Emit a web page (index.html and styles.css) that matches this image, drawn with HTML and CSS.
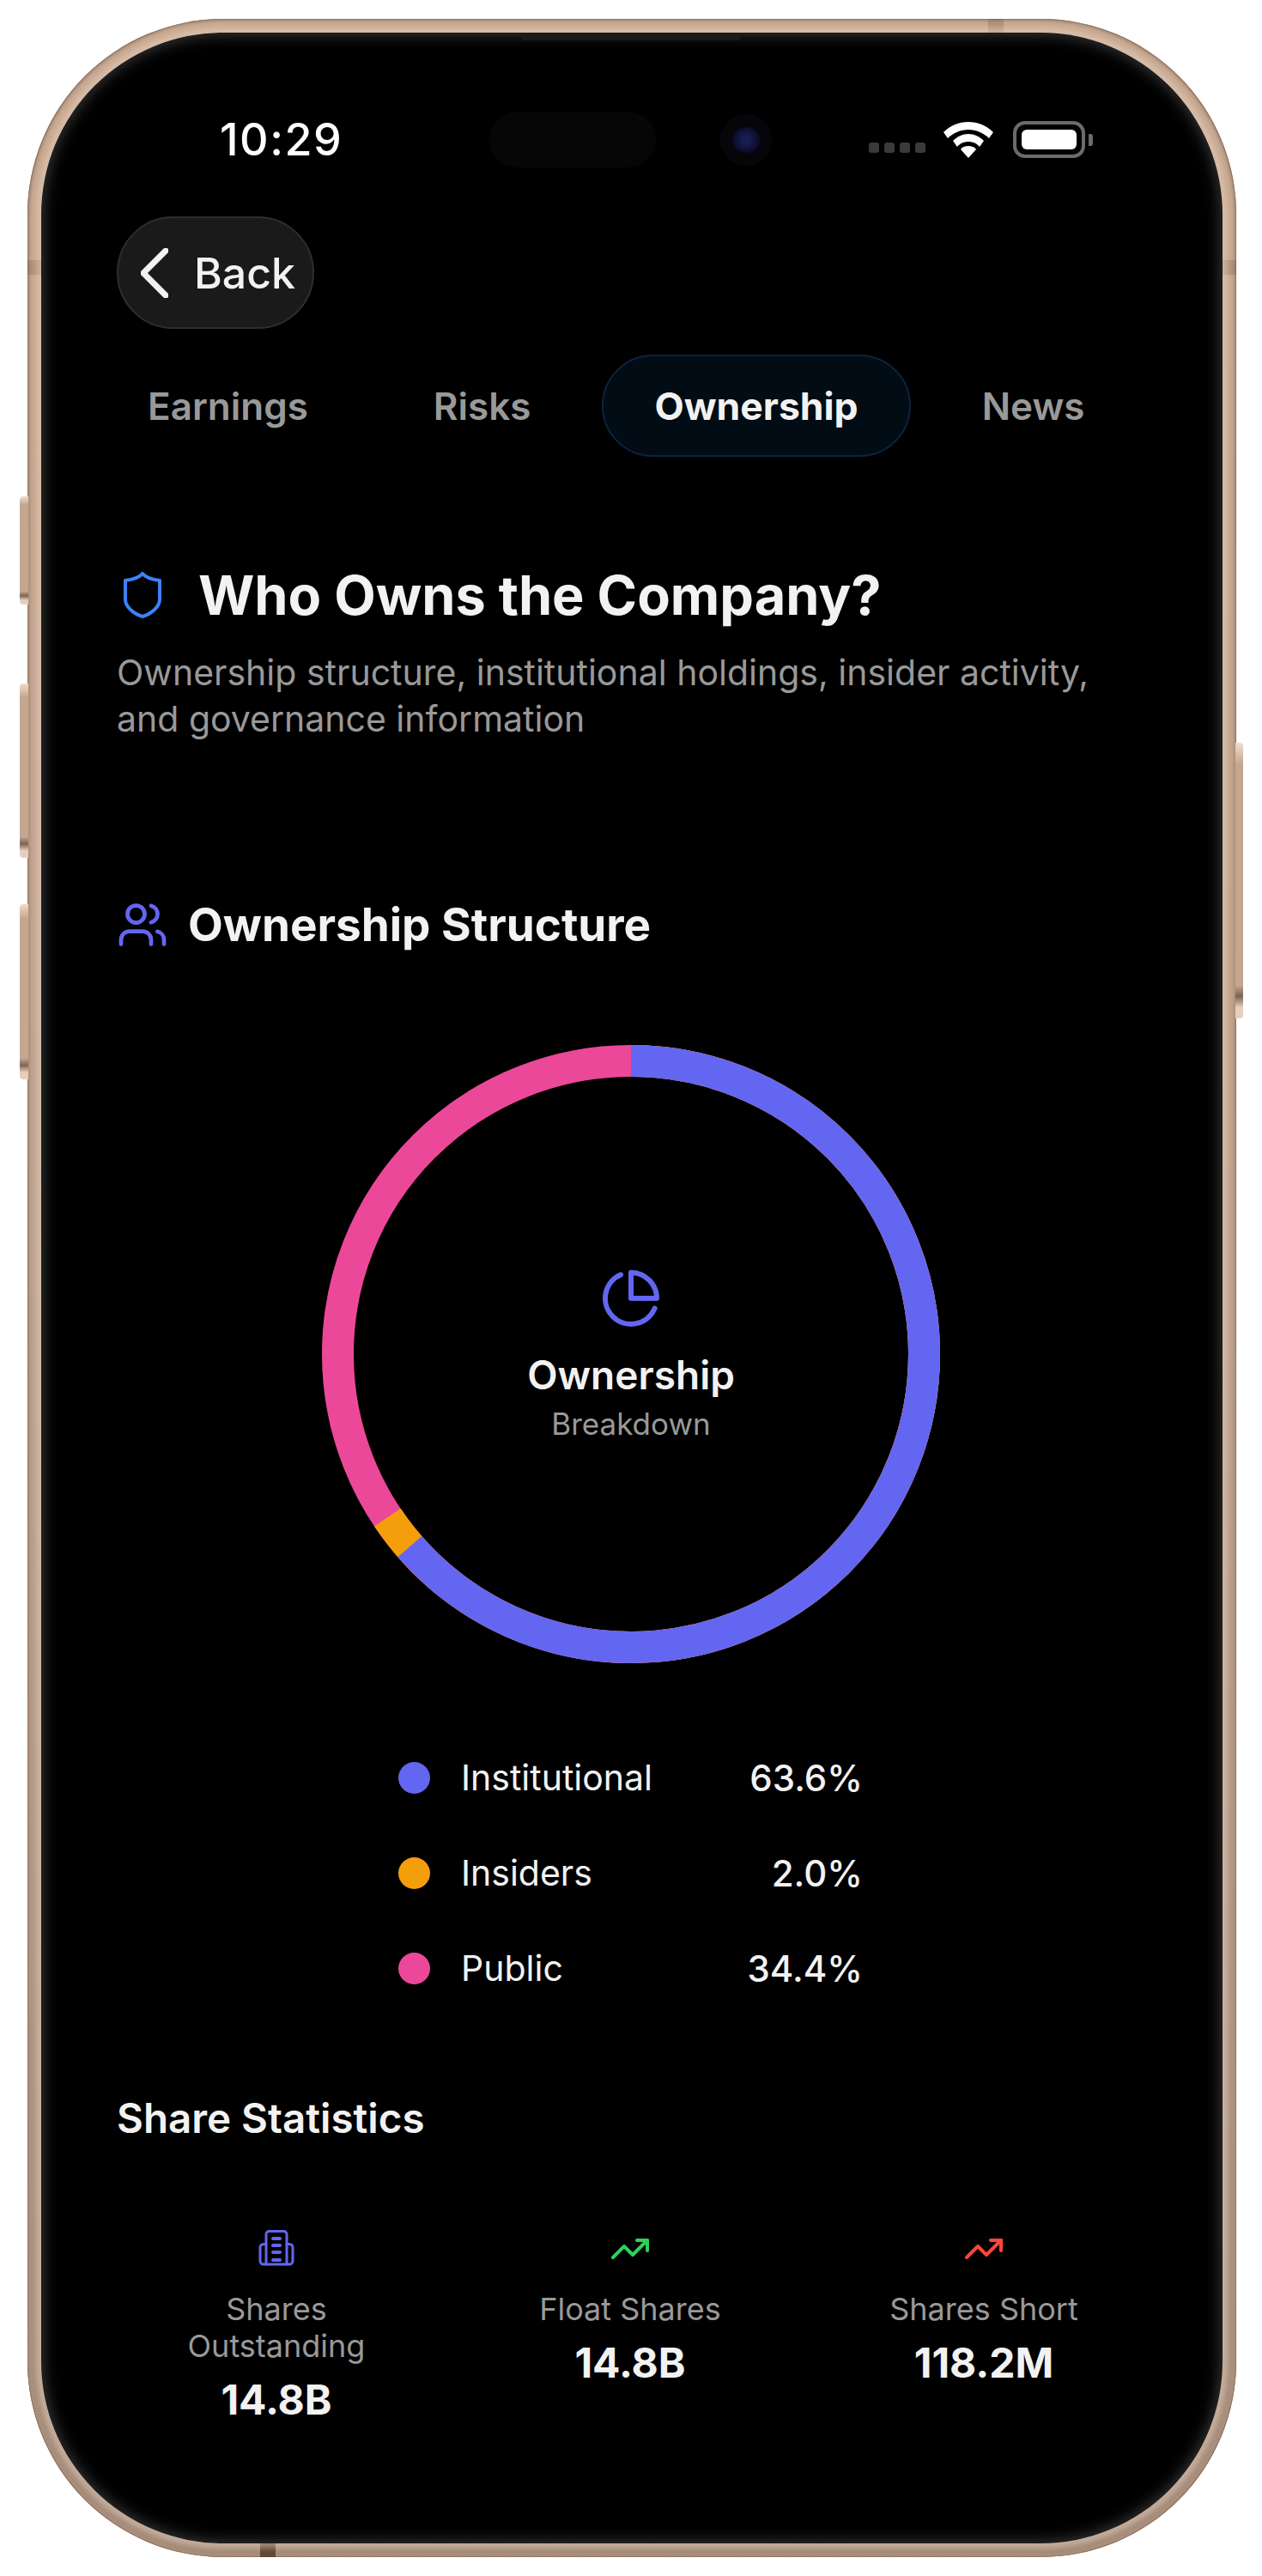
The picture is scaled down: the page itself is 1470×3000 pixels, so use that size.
FILE: index.html
```html
<!DOCTYPE html>
<html lang="en">
<head>
    <meta charset="UTF-8">
    <meta name="viewport" content="width=device-width, initial-scale=1.0">
    <title>Ownership</title>
    <link rel="stylesheet" href="styles.css">
</head>

<body>
    <div class="phone">
        <span class="side-btn btn-action"></span>
        <span class="side-btn btn-up"></span>
        <span class="side-btn btn-down"></span>
        <span class="side-btn btn-power"></span>
        <span class="band band-top"></span>
        <span class="band band-left"></span>
        <span class="band band-right"></span>
        <span class="band band-bottom"></span>

        <div class="screen">
            <span class="speaker"></span>

            <div class="status-bar">
                <span class="time">10:29</span>
                <span class="island"></span>
                <span class="camera"><span class="lens"></span></span>
                <span class="signal"><i></i><i></i><i></i><i></i></span>
                <svg class="wifi" viewBox="0 0 58 42"><path d="M29 0C18 0 8 4 0 12l5 7c6-6 15-10 24-10s18 4 24 10l5-7C50 4 40 0 29 0z" fill="#fff"/><path d="M29 14c-7 0-13 3-18 8l5 7c3-4 8-6 13-6s10 2 13 6l5-7c-5-5-11-8-18-8z" fill="#fff"/><path d="M29 28c-4 0-7 1-9 4l9 10 9-10c-2-3-5-4-9-4z" fill="#fff"/></svg>
                <span class="battery"><span class="battery-fill"></span></span>
                <span class="battery-nub"></span>
            </div>

            <button class="back-btn">
                <svg class="back-icon" viewBox="0 0 32 58"><path d="M29 3 3 29l26 26" fill="none" stroke="#f2f2f2" stroke-width="7" stroke-linecap="round" stroke-linejoin="round"/></svg>
                Back
            </button>

            <div class="tabs">
                <span class="tab">Earnings</span>
                <span class="tab">Risks</span>
                <span class="tab active">Ownership</span>
                <span class="tab">News</span>
            </div>

            <div class="title-row">
                <svg class="shield-icon" viewBox="0 0 46 54"><path d="M23 2c4 5 10 7 20 8v22c0 9-10 17-20 20C13 49 3 41 3 32V10c10-1 16-3 20-8z" fill="none" stroke="#3b82f6" stroke-width="4" stroke-linejoin="round"/></svg>
                <h1>Who Owns the Company?</h1>
            </div>
            <p class="subtitle">Ownership structure, institutional holdings, insider activity, and governance information</p>

            <div class="section-row">
                <svg class="users-icon" viewBox="0 0 24 24" fill="none" stroke="#6366f1" stroke-width="1.9" stroke-linecap="round" stroke-linejoin="round"><path d="M16 21v-2a4 4 0 0 0-4-4H6a4 4 0 0 0-4 4v2"/><circle cx="9" cy="7" r="4"/><path d="M22 21v-2a4 4 0 0 0-3-3.87"/><path d="M16 3.13a4 4 0 0 1 0 7.75"/></svg>
                <h2>Ownership Structure</h2>
            </div>

            <div class="donut">
                <svg class="donut-ring" viewBox="0 0 720 720">
                    <g fill="none" stroke-width="37" transform="rotate(-90 360 360)">
                        <circle cx="360" cy="360" r="341.5" stroke="#ec4899"/>
                        <circle cx="360" cy="360" r="341.5" stroke="#f59e0b" pathLength="100" stroke-dasharray="65.6 34.4"/>
                        <circle cx="360" cy="360" r="341.5" stroke="#6366f1" pathLength="100" stroke-dasharray="63.6 36.4"/>
                    </g>
                </svg>
                <div class="donut-center">
                    <svg class="pie-icon" viewBox="0 0 24 24" fill="none" stroke="#6366f1" stroke-width="2" stroke-linecap="round" stroke-linejoin="round"><path d="M21.21 15.89A10 10 0 1 1 8 2.83"/><path d="M22 12A10 10 0 0 0 12 2v10z"/></svg>
                    <div class="donut-title">Ownership</div>
                    <div class="donut-sub">Breakdown</div>
                </div>
            </div>

            <div class="legend">
                <div class="legend-row"><span class="dot dot-inst"></span><span class="legend-name">Institutional</span><span class="legend-pct">63.6%</span></div>
                <div class="legend-row"><span class="dot dot-ins"></span><span class="legend-name">Insiders</span><span class="legend-pct">2.0%</span></div>
                <div class="legend-row"><span class="dot dot-pub"></span><span class="legend-name">Public</span><span class="legend-pct">34.4%</span></div>
            </div>

            <h3>Share Statistics</h3>

            <div class="stats">
                <div class="stat">
                    <svg class="stat-icon" viewBox="0 0 48 48" fill="none" stroke="#6366f1" stroke-width="3" stroke-linecap="round" stroke-linejoin="round"><path d="M12 42V7a3.5 3.5 0 0 1 3.5-3.5h17A3.5 3.5 0 0 1 36 7v35"/><path d="M12 18.5H9a4 4 0 0 0-4 4V38a4 4 0 0 0 4 4h30a4 4 0 0 0 4-4V22.5a4 4 0 0 0-4-4h-3"/><path d="M20 12h8M20 20h8M20 28h8M20 37h8" stroke-width="4"/></svg>
                    <div class="stat-label">Shares Outstanding</div>
                    <div class="stat-value">14.8B</div>
                </div>
                <div class="stat">
                    <svg class="stat-icon" viewBox="0 0 24 24" fill="none" stroke="#30d158" stroke-width="2" stroke-linecap="round" stroke-linejoin="round"><polyline points="22 7 13.5 15.5 8.5 10.5 2 17"/><polyline points="16 7 22 7 22 13"/></svg>
                    <div class="stat-label">Float Shares</div>
                    <div class="stat-value">14.8B</div>
                </div>
                <div class="stat">
                    <svg class="stat-icon" viewBox="0 0 24 24" fill="none" stroke="#ff453a" stroke-width="2" stroke-linecap="round" stroke-linejoin="round"><polyline points="22 7 13.5 15.5 8.5 10.5 2 17"/><polyline points="16 7 22 7 22 13"/></svg>
                    <div class="stat-label">Shares Short</div>
                    <div class="stat-value">118.2M</div>
                </div>
            </div>
        </div>
    </div>
</body>
</html>
```

FILE: styles.css
```css
* {
    box-sizing: border-box;
}

body {
    margin: 0;
    background: #fff;
    font-family: Inter, "Noto Sans", sans-serif;
    color: #f2f2f2;
}

/* device frame */
.phone {
    position: relative;
    width: 1408px;
    height: 2956px;
    margin: 22px 0 0 32px;
    padding: 17px;
    border-radius: 228px;
    background: linear-gradient(#c9aa93, #bea28d 50%, #a58c7b);
    box-shadow: inset 0 0 0 1px #8f7463, inset 0 0 3px 3px #ab8f7b;
}

.side-btn {
    position: absolute;
    width: 10px;
    border-radius: 4px 0 0 4px;
    background: linear-gradient(#f0dccb, #c5a690 8%, #c5a690 88%, #7d6352 92%, #e6cfbc 96%);
}

.btn-action {
    left: -9px;
    top: 556px;
    height: 126px;
}

.btn-up {
    left: -9px;
    top: 774px;
    height: 203px;
}

.btn-down {
    left: -9px;
    top: 1031px;
    height: 204px;
}

.btn-power {
    left: 1407px;
    top: 843px;
    height: 321px;
    width: 9px;
    border-radius: 0 4px 4px 0;
}

.band {
    position: absolute;
    background: rgba(96, 68, 50, 0.22);
}

.band-top {
    left: 1119px;
    top: 0;
    width: 18px;
    height: 17px;
}

.band-bottom {
    left: 271px;
    bottom: 0;
    width: 18px;
    height: 17px;
    background: rgba(70, 44, 28, 0.7);
}

.band-left {
    left: 0;
    top: 281px;
    width: 17px;
    height: 17px;
}

.band-right {
    right: 0;
    top: 281px;
    width: 17px;
    height: 17px;
}

.screen {
    position: relative;
    height: 100%;
    padding: 91px 87px 0;
    border-radius: 211px;
    background: #000;
    box-shadow: 0 0 0 1px #1c1c1c, 0 0 5px 7px rgba(238, 216, 198, 0.4), inset 0 0 18px rgba(255, 255, 255, 0.26);
    overflow: hidden;
}

.speaker {
    position: absolute;
    left: 556px;
    top: 0;
    width: 260px;
    height: 8px;
    background: #1b1b1b;
    clip-path: polygon(0 0, 100% 0, 98.5% 100%, 1.5% 100%);
}

/* status bar */
.status-bar {
    display: flex;
    align-items: center;
    height: 65px;
}

.time {
    width: 434px;
    margin-left: 120px;
    margin-right: -120px;
    font-size: 52px;
    font-weight: 500;
    letter-spacing: 1.5px;
    color: #fff;
    flex: none;
}

.island {
    width: 194px;
    height: 65px;
    border-radius: 33px;
    background: #060606;
    flex: none;
}

.camera {
    display: flex;
    align-items: center;
    justify-content: center;
    width: 60px;
    height: 60px;
    margin-left: 75px;
    border-radius: 50%;
    background: #07050a;
    flex: none;
}

.lens {
    width: 32px;
    height: 30px;
    border-radius: 50%;
    background: radial-gradient(circle, #181c50 20%, #0a0b28 70%, #05050f);
}

.signal {
    display: flex;
    gap: 6px;
    margin-left: 113px;
    margin-top: 18px;
    flex: none;
}

.signal i {
    width: 12px;
    height: 12px;
    border-radius: 3px;
    background: #3a3a3a;
}

.wifi {
    width: 58px;
    height: 42px;
    margin-left: 21px;
    flex: none;
}

.battery {
    display: block;
    width: 84px;
    height: 43px;
    margin-left: 23px;
    padding: 6px;
    border: 4px solid #6b6b6b;
    border-radius: 14px;
    flex: none;
}

.battery-fill {
    display: block;
    height: 100%;
    border-radius: 6px;
    background: #fff;
}

.battery-nub {
    width: 5px;
    height: 14px;
    margin-left: 4px;
    border-radius: 0 3px 3px 0;
    background: #6b6b6b;
    flex: none;
}

/* nav */
.back-btn {
    display: flex;
    align-items: center;
    gap: 30px;
    width: 230px;
    height: 131px;
    margin-top: 57px;
    padding: 0 0 0 26px;
    border: 2px solid #2e2e2e;
    border-radius: 66px;
    background: #1a1a1a;
    color: #f2f2f2;
    font-family: inherit;
    font-size: 50px;
    font-weight: 500;
}

.back-icon {
    width: 32px;
    height: 58px;
    flex: none;
}

.tabs {
    display: flex;
    gap: 20px;
    margin: 30px 0 0 -27px;
}

.tab {
    display: flex;
    align-items: center;
    height: 119px;
    padding: 0 61px;
    border: 2px solid transparent;
    border-radius: 60px;
    font-size: 44px;
    font-weight: 600;
    color: #999;
    flex: none;
}

.tab.active {
    padding: 0 59px;
    background: #020c14;
    border-color: #0b2440;
    font-size: 44.5px;
    font-weight: 700;
    color: #f2f2f2;
}

/* heading */
.title-row {
    display: flex;
    align-items: center;
    gap: 42px;
    margin-top: 124px;
    padding-left: 7px;
}

.shield-icon {
    width: 46px;
    height: 54px;
    flex: none;
}

h1 {
    margin: 0;
    font-size: 63px;
    line-height: 74px;
    font-weight: 700;
}

.subtitle {
    width: 1160px;
    margin: 26px 0 0;
    font-size: 41px;
    line-height: 54px;
    color: #999;
}

.section-row {
    display: flex;
    align-items: center;
    gap: 23px;
    margin-top: 180px;
}

.users-icon {
    width: 60px;
    height: 60px;
    flex: none;
}

h2 {
    margin: 0;
    font-size: 53px;
    line-height: 66px;
    font-weight: 700;
}

/* donut */
.donut {
    position: relative;
    width: 720px;
    height: 720px;
    margin: 107px 0 0 239px;
}

.donut-ring {
    display: block;
    width: 720px;
    height: 720px;
}

.donut-center {
    position: absolute;
    left: 0;
    right: 0;
    top: 259px;
    display: flex;
    flex-direction: column;
    align-items: center;
}

.pie-icon {
    width: 72px;
    height: 72px;
}

.donut-title {
    margin-top: 25px;
    font-size: 46px;
    line-height: 56px;
    font-weight: 600;
}

.donut-sub {
    margin-top: 7px;
    font-size: 35px;
    line-height: 44px;
    color: #999;
}

/* legend */
.legend {
    display: flex;
    flex-direction: column;
    gap: 61px;
    width: 541px;
    margin: 108px 0 0 328px;
}

.legend-row {
    display: flex;
    align-items: center;
    height: 50px;
    font-size: 41px;
}

.dot {
    width: 37px;
    height: 37px;
    margin-right: 36px;
    border-radius: 50%;
    flex: none;
}

.dot-inst {
    background: #6366f1;
}

.dot-ins {
    background: #f59e0b;
}

.dot-pub {
    background: #ec4899;
}

.legend-pct {
    margin-left: auto;
    font-size: 42px;
    font-weight: 500;
}

/* stats */
h3 {
    margin: 120px 0 0;
    font-size: 47.5px;
    line-height: 60px;
    font-weight: 600;
}

.stats {
    display: grid;
    grid-template-columns: repeat(3, 412px);
    margin: 98px 0 0 -20px;
}

.stat {
    display: flex;
    flex-direction: column;
    align-items: center;
}

.stat-icon {
    width: 48px;
    height: 48px;
}

.stat-label {
    max-width: 280px;
    margin-top: 25px;
    font-size: 36px;
    line-height: 43px;
    text-align: center;
    color: #999;
}

.stat-value {
    margin-top: 13px;
    font-size: 48px;
    line-height: 56px;
    font-weight: 700;
}
```
